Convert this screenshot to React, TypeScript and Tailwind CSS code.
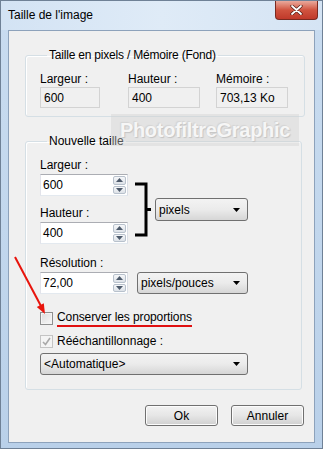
import React from 'react';

const font = { fontFamily: '"Liberation Sans", Arial, sans-serif' };

function SpinField({ value }: { value: string }) {
  return (
    <div className="flex h-[22px] w-[88px] border border-[#abadb3] border-l-[#e2e3ea] border-r-[#dbdfe6] border-b-[#e3e9ef] bg-white">
      <div className="flex-1 pl-[2px] pt-[3px] text-[12px] leading-[14px] text-black">{value}</div>
      <div className="flex w-[14px] flex-col gap-[1px] py-[1px] pr-[1px]">
        <SpinButton up />
        <SpinButton />
      </div>
    </div>
  );
}

function SpinButton({ up }: { up?: boolean }) {
  return (
    <div className="flex flex-1 items-center justify-center rounded-[2px] border border-[#b8c1cc] bg-gradient-to-b from-[#f6f7f9] to-[#dde2e8]">
      <svg width="7" height="4" viewBox="0 0 7 4">
        <path d={up ? 'M0 4 L3.5 0 L7 4 Z' : 'M0 0 L3.5 4 L7 0 Z'} fill="#4d5a6b" />
      </svg>
    </div>
  );
}

function Combo({ label, className }: { label: string; className: string }) {
  return (
    <div
      className={`flex items-center justify-between rounded-[3px] border border-[#707070] bg-gradient-to-b from-[#f3f3f3] via-[#ebebeb] to-[#d6d6d6] pl-[3px] pr-[7px] text-[12px] text-black ${className}`}
    >
      <span>{label}</span>
      <svg width="7" height="4" viewBox="0 0 7 4">
        <path d="M0 0 L7 0 L3.5 4 Z" fill="#000" />
      </svg>
    </div>
  );
}

function ReadField({ value, w }: { value: string; w: string }) {
  return (
    <div className={`h-[21px] border border-[#d3d3d3] bg-[#f0f0f0] pl-[3px] pt-[3px] text-[12px] leading-[14px] text-black ${w}`}>
      {value}
    </div>
  );
}

function Button({ label }: { label: string }) {
  return (
    <div className="flex h-[21px] w-[73px] items-center justify-center rounded-[3px] border border-[#707070] bg-gradient-to-b from-[#f2f2f2] via-[#e6e6e6] to-[#d0d0d0] text-[12px] text-black shadow-[inset_0_0_0_1px_#fcfcfc]">
      {label}
    </div>
  );
}

export default function App() {
  return (
    <div
      className="relative flex h-[449px] w-[323px] flex-col overflow-hidden border border-[#6f8196] bg-gradient-to-b from-[#c9dcf0] via-[#c2d7ed] to-[#b9d0e9]"
      style={font}
    >
      {/* title bar */}
      <div className="flex h-[29px] items-start justify-between bg-gradient-to-r from-[#d3e3f4] via-[#dfebf7] to-[#d5e4f4]">
        <div className="pl-[7px] pt-[7px] text-[12px] leading-[14px] text-black">Taille de l'image</div>
        <div className="mr-[4px] flex h-[19px] w-[43px] items-center justify-center rounded-b-[4px] border border-t-0 border-[#7a2a20] bg-gradient-to-b from-[#e9a99c] via-[#d0533f] to-[#c0392a]">
          <svg width="13" height="10" viewBox="0 0 13 10">
            <path d="M2 1 L11 9 M11 1 L2 9" stroke="#4a1a12" strokeWidth="3.2" strokeLinecap="round" />
            <path d="M2 1 L11 9 M11 1 L2 9" stroke="#ffffff" strokeWidth="1.8" strokeLinecap="round" />
          </svg>
        </div>
      </div>

      {/* client area */}
      <div className="mx-[7px] mb-[5px] flex flex-1 flex-col border border-[#8da2bb] bg-[#f0f0f0]">
        <fieldset className="ml-[16px] mt-[16px] w-[277px] rounded-[3px] border border-[#d5dfe5] pb-[8px] pl-[14px] shadow-[inset_1px_1px_0_#fff]">
          <legend className="ml-[7px] px-[2px] text-[12px] leading-4 tracking-[-0.2px] text-black">Taille en pixels / Mémoire (Fond)</legend>
          <div className="flex">
            <div className="w-[88px]">
              <div className="mt-[8px] h-4 text-[12px] leading-4">Largeur :</div>
              <ReadField value="600" w="w-[60px]" />
            </div>
            <div className="w-[88px]">
              <div className="mt-[8px] h-4 text-[12px] leading-4">Hauteur :</div>
              <ReadField value="400" w="w-[72px]" />
            </div>
            <div className="w-[88px]">
              <div className="mt-[8px] h-4 text-[12px] leading-4">Mémoire :</div>
              <ReadField value="703,13 Ko" w="w-[72px]" />
            </div>
          </div>
        </fieldset>

        <fieldset className="ml-[16px] mt-[16px] w-[277px] rounded-[3px] border border-[#d5dfe5] pb-[14px] pl-[14px] shadow-[inset_1px_1px_0_#fff]">
          <legend className="ml-[7px] px-[2px] text-[12px] leading-4 text-black">Nouvelle taille</legend>
          <div className="flex items-start">
            <div className="w-[88px]">
              <div className="mt-[8px] h-4 text-[12px] leading-4">Largeur :</div>
              <div className="mt-[1px]">
                <SpinField value="600" />
              </div>
              <div className="mt-[9px] h-4 text-[12px] leading-4">Hauteur :</div>
              <div className="mt-[1px]">
                <SpinField value="400" />
              </div>
            </div>
            <svg className="ml-[6px] mt-[33px]" width="18" height="55" viewBox="0 0 18 55">
              <path d="M1 2 H12 V53 H1 M12 27.5 H17" stroke="#000" strokeWidth="3" fill="none" />
            </svg>
            <Combo label="pixels" className="ml-[3px] mt-[49px] h-[23px] w-[93px]" />
          </div>

          <div className="mt-[11px] h-4 text-[12px] leading-4">Résolution :</div>
          <div className="mt-[1px] flex">
            <SpinField value="72,00" />
            <Combo label="pixels/pouces" className="ml-[9px] h-[22px] w-[111px]" />
          </div>

          <div className="mt-[16px] flex h-4 items-center">
            <div className="h-[13px] w-[13px] border border-[#8e8f8f] bg-gradient-to-br from-[#dcdcdc] to-[#f8f8f8] shadow-[inset_0_0_0_1px_#f4f4f4]" />
            <span className="ml-[4px] border-b-2 border-[#e01010] text-[12px] leading-[15px] tracking-[-0.1px] text-black">Conserver les proportions</span>
          </div>

          <div className="mt-[7px] flex h-4 items-center">
            <div className="flex h-[13px] w-[13px] items-center justify-center border border-[#c4c4c4] bg-[#f4f4f4]">
              <svg width="9" height="9" viewBox="0 0 9 9">
                <path d="M1 5 L3.5 7.5 L8 1" stroke="#a9a9a9" strokeWidth="1.6" fill="none" />
              </svg>
            </div>
            <span className="ml-[4px] text-[12px] leading-4 text-black">Rééchantillonnage :</span>
          </div>

          <Combo label="<Automatique>" className="mt-[4px] h-[22px] w-[208px]" />
        </fieldset>

        <div className="mt-[15px] flex justify-end gap-[13px] pr-[10px]">
          <Button label="Ok" />
          <Button label="Annuler" />
        </div>
      </div>

      {/* watermark */}
      <div className="absolute left-[110px] top-[113px] flex h-[32px] w-[188px] items-center justify-center bg-[#cfcfcf]/40">
        <span
          className="text-[20px] font-bold tracking-[-0.3px] text-[#f6f6f6]"
          style={{ textShadow: '1px 1px 1px #c4c4c4, -1px -1px 1px #d4d4d4' }}
        >
          PhotofiltreGraphic
        </span>
      </div>

      {/* red arrow */}
      <svg className="absolute left-0 top-0" width="323" height="449" viewBox="0 0 323 449" pointerEvents="none">
        <line x1="14" y1="256" x2="40.5" y2="306" stroke="#e8140c" strokeWidth="2" />
        <polygon points="35.8,306.1 42.8,302.3 44,313" fill="#e8140c" />
      </svg>
    </div>
  );
}
